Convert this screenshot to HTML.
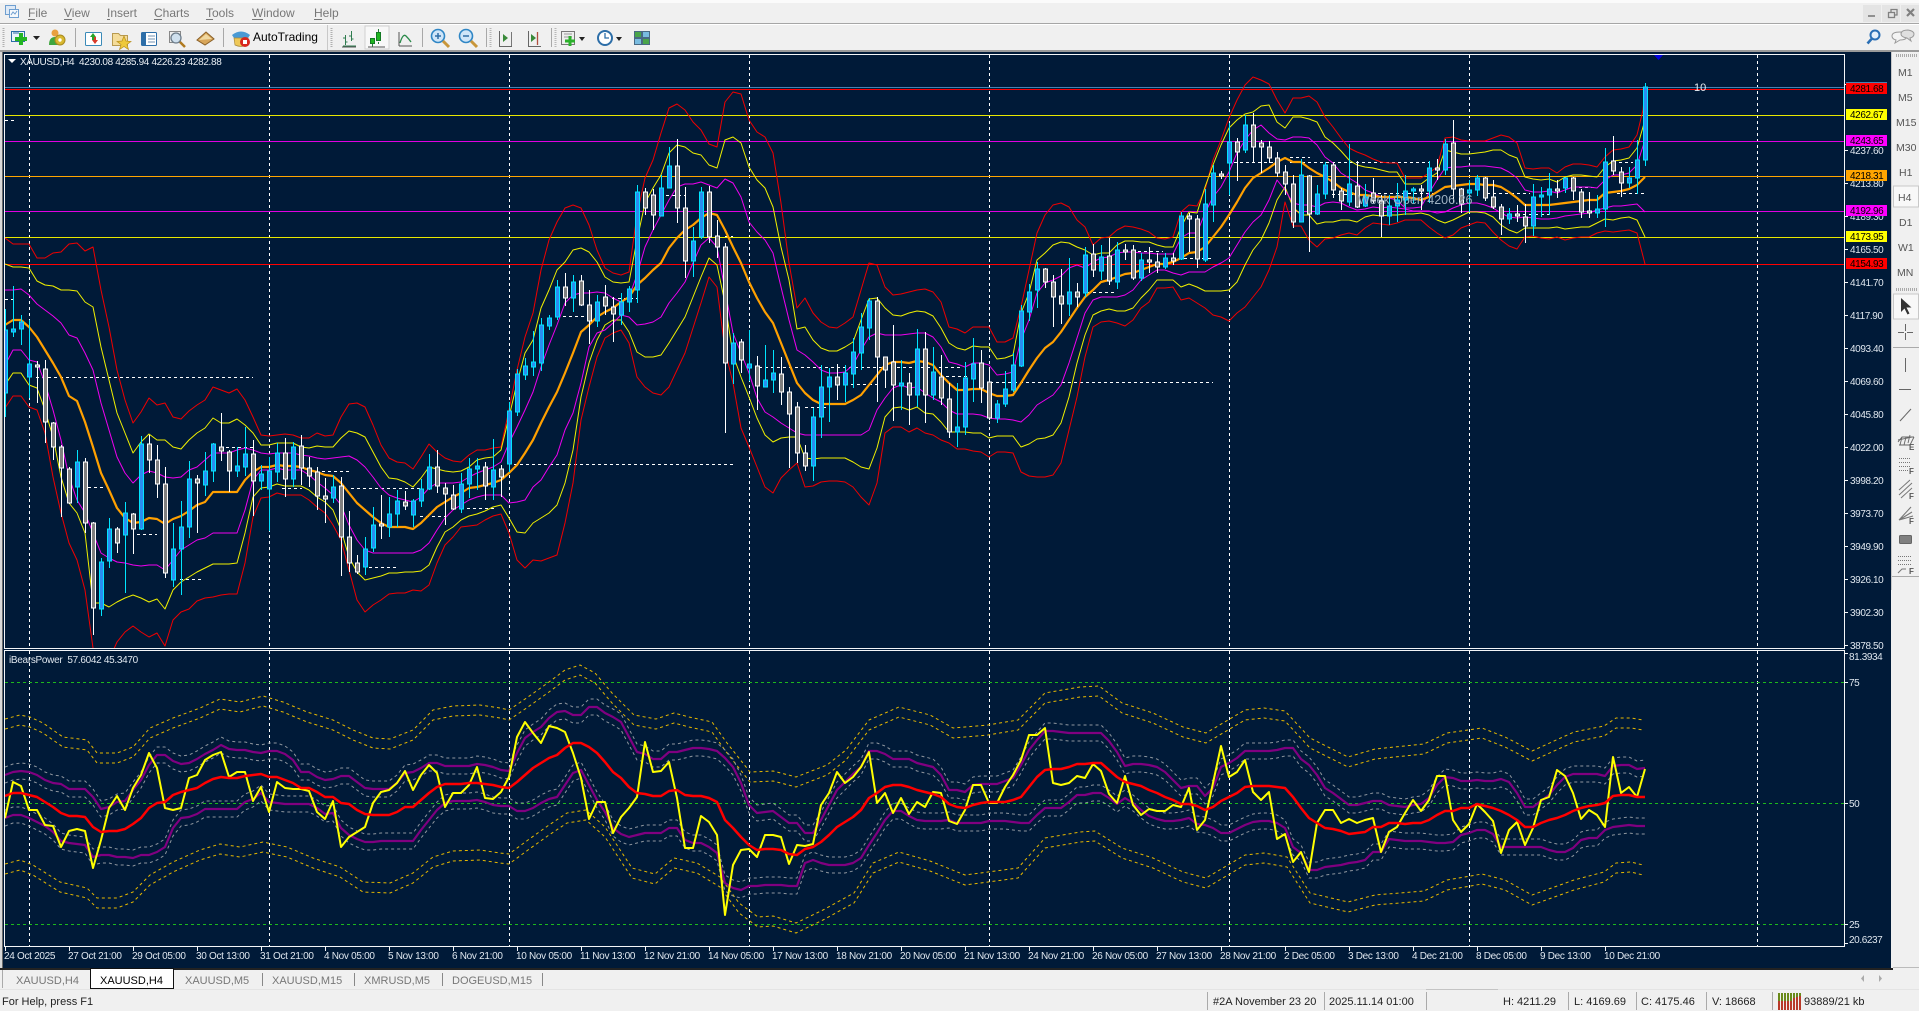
<!DOCTYPE html>
<html><head><meta charset="utf-8"><title>MT4</title>
<style>
html,body{margin:0;padding:0;background:#f0f0f0;width:1919px;height:1011px;overflow:hidden}
svg{display:block;position:absolute;left:0;top:0}
text{font-family:"Liberation Sans",sans-serif}
.m{font-size:12px;fill:#777}
.a{font-size:10px;fill:#dfe7ef;letter-spacing:-.4px}
.t{font-size:10px;fill:#dfe7ef;letter-spacing:-.3px}
.l{font-size:10px;fill:#000;letter-spacing:-.4px}
.tb{font-size:11px;fill:#777}
.s{font-size:11px;fill:#222}
.f{font-size:10.5px;fill:#555}
.b{fill:none;stroke-linejoin:round}
</style></head><body>
<svg width="1919" height="1011" viewBox="0 0 1919 1011" shape-rendering="auto">
<defs>
<clipPath id="cm"><rect x="5" y="55" width="1839" height="593"/></clipPath>
<clipPath id="cs"><rect x="5" y="651" width="1839" height="295"/></clipPath>
<path id="pu" d="M5 775 13 772 21 771 29 772 37 775 45 780 53 783 61 784 69 789 77 789 85 789 93 797 101 809 109 807 117 802 125 801 133 790 141 780 149 765 157 755 165 755 173 761 181 764 189 763 197 759 205 754 213 750 221 745 229 749 237 750 245 750 253 752 261 753 269 751 277 751 285 754 293 760 301 772 309 772 317 777 325 780 333 779 341 776 349 776 357 782 365 788 373 789 381 789 389 789 397 783 405 773 413 772 421 768 429 763 437 763 445 766 453 766 461 766 469 766 477 764 485 765 493 767 501 770 509 771 517 753 525 738 533 732 541 727 549 718 557 712 565 711 573 715 581 715 589 707 597 707 605 713 613 717 621 722 629 737 637 752 645 754 653 759 661 759 669 752 677 752 685 750 693 748 701 748 709 749 717 751 725 758 733 767 741 783 749 805 757 813 765 812 773 811 781 817 789 823 797 823 805 833 813 833 821 820 829 805 837 790 845 782 853 774 861 767 869 751 877 751 885 754 893 759 901 759 909 759 917 763 925 765 933 767 941 775 949 790 957 790 965 792 973 785 981 784 989 784 997 784 1005 781 1013 778 1021 765 1029 750 1037 740 1045 731 1053 731 1061 732 1069 733 1077 733 1085 733 1093 733 1101 733 1109 741 1117 752 1125 766 1133 764 1141 764 1149 765 1157 767 1165 772 1173 780 1181 788 1189 786 1197 786 1205 796 1213 788 1221 767 1229 763 1237 758 1245 751 1253 751 1261 751 1269 751 1277 750 1285 748 1293 748 1301 759 1309 765 1317 775 1325 788 1333 793 1341 799 1349 805 1357 805 1365 803 1373 801 1381 801 1389 805 1397 806 1405 807 1413 805 1421 804 1429 798 1437 785 1445 777 1453 778 1461 781 1469 781 1477 780 1485 781 1493 781 1501 779 1509 782 1517 793 1525 807 1533 807 1541 801 1549 795 1557 785 1565 777 1573 774 1581 774 1589 774 1597 774 1605 776 1613 766 1621 765 1629 765 1637 769 1645 768"/>
<path id="pl" d="M5 818 13 815 21 815 29 818 37 822 45 826 53 832 61 841 69 843 77 844 85 845 93 857 101 855 109 855 117 857 125 857 133 858 141 855 149 855 157 852 165 847 173 828 181 818 189 817 197 814 205 809 213 809 221 809 229 809 237 809 245 802 253 799 261 793 269 802 277 803 285 804 293 804 301 804 309 804 317 808 325 814 333 813 341 828 349 835 357 839 365 842 373 842 381 841 389 841 397 841 405 841 413 841 421 830 429 820 437 810 445 803 453 801 461 801 469 801 477 800 485 802 493 805 501 806 509 806 517 811 525 811 533 808 541 803 549 799 557 797 565 785 573 773 581 770 589 785 597 800 605 812 613 828 621 834 629 837 637 835 645 833 653 833 661 833 669 828 677 828 685 840 693 843 701 843 709 847 717 853 725 883 733 888 741 890 749 886 757 886 765 885 773 885 781 885 789 886 797 886 805 863 813 860 821 863 829 865 837 865 845 865 853 863 861 858 869 845 877 833 885 820 893 811 901 811 909 816 917 820 925 821 933 821 941 821 949 820 957 823 965 823 973 823 981 823 989 821 997 821 1005 821 1013 822 1021 823 1029 823 1037 815 1045 808 1053 808 1061 808 1069 802 1077 795 1085 795 1093 793 1101 793 1109 798 1117 804 1125 798 1133 803 1141 810 1149 816 1157 819 1165 821 1173 821 1181 820 1189 818 1197 824 1205 825 1213 828 1221 833 1229 833 1237 829 1245 825 1253 822 1261 821 1269 821 1277 823 1285 828 1293 847 1301 853 1309 870 1317 870 1325 867 1333 866 1341 865 1349 863 1357 862 1365 860 1373 852 1381 852 1389 839 1397 840 1405 841 1413 841 1421 841 1429 842 1437 843 1445 843 1453 842 1461 835 1469 833 1477 830 1485 830 1493 834 1501 847 1509 847 1517 847 1525 847 1533 847 1541 847 1549 850 1557 852 1565 852 1573 848 1581 840 1589 838 1597 838 1605 830 1613 827 1621 826 1629 825 1637 826 1645 826"/>
<path id="gu" d="M5 719 20 715 30 717 43 723 63 737 87 740 97 753 117 753 133 747 150 728 173 718 200 708 220 699 240 702 263 696 283 702 307 712 333 720 353 730 373 738 390 739 413 730 433 710 453 706 480 705 500 708 509 710 528 697 549 682 565 670 580 665 595 673 612 693 634 715 656 719 674 713 689 717 712 722 727 743 750 772 773 771 796 777 827 765 846 750 869 720 899 707 930 715 953 728 988 725 1018 720 1045 693 1080 687 1099 686 1122 703 1153 713 1183 727 1206 733 1245 710 1264 708 1285 711 1310 738 1348 757 1375 749 1424 744 1447 733 1482 728 1505 737 1532 751 1574 732 1604 726 1616 718 1631 718 1643 720"/>
<path id="gl" d="M5 864 20 860 33 865 60 882 87 888 97 898 117 898 133 892 150 875 173 862 200 850 220 844 240 847 263 842 287 847 313 858 340 867 363 882 390 883 413 873 433 857 453 851 480 850 500 853 509 854 528 840 549 825 567 813 586 810 605 827 632 868 655 874 674 858 697 863 720 877 739 903 758 917 773 916 796 923 823 910 854 893 873 863 899 852 930 861 965 875 988 872 1018 868 1045 838 1080 832 1095 831 1122 848 1153 858 1183 872 1206 878 1245 855 1264 853 1287 857 1310 893 1348 902 1375 895 1424 891 1447 880 1482 874 1505 880 1532 895 1574 880 1604 872 1616 863 1631 862 1643 865"/>
</defs>
<!-- window chrome -->
<rect x="0" y="0" width="1919" height="1011" fill="#f0f0f0"/>
<rect x="0" y="0" width="1919" height="3" fill="#fbfbfb"/>
<rect x="0" y="23" width="1919" height="1" fill="#a6a6a6"/>
<rect x="0" y="24" width="1919" height="1" fill="#fff"/>
<rect x="0" y="50" width="1919" height="2" fill="#9a9a9a"/>
<!-- app icon -->
<g fill="none" stroke="#6f9fd0"><rect x="5.5" y="5.5" width="10" height="9" fill="#dfeaf6"/><rect x="9.5" y="9.5" width="9" height="8" fill="#f4f8fc"/><path d="M11 15l2-3 2 2 2-3"/></g>
<text class="m" x="28" y="17">File</text>
<text class="m" x="64" y="17">View</text>
<text class="m" x="107" y="17">Insert</text>
<text class="m" x="154" y="17">Charts</text>
<text class="m" x="206" y="17">Tools</text>
<text class="m" x="252" y="17">Window</text>
<text class="m" x="314" y="17">Help</text>
<g fill="#777"><rect x="28" y="19" width="7" height="1"/><rect x="64" y="19" width="8" height="1"/><rect x="107" y="19" width="3" height="1"/><rect x="154" y="19" width="8" height="1"/><rect x="206" y="19" width="7" height="1"/><rect x="252" y="19" width="11" height="1"/><rect x="314" y="19" width="8" height="1"/></g>
<!-- window buttons -->
<rect x="1863" y="5" width="18" height="17" fill="#e4e4e4"/><rect x="1882" y="5" width="18" height="17" fill="#e4e4e4"/><rect x="1901" y="5" width="18" height="17" fill="#e4e4e4"/>
<rect x="1868" y="15" width="7" height="2" fill="#909090"/>
<g fill="none" stroke="#808080" stroke-width="1.3"><rect x="1888.5" y="12.5" width="6" height="5"/><path d="M1891 12V9.500h6v5.500h-2"/></g>
<path d="M1907 9l7 7M1914 9l-7 7" stroke="#808080" stroke-width="2.200"/>
<!-- toolbar grips -->
<path d="M3.500 28V48M331.500 28V48" stroke="#b0b0b0" stroke-width="2" stroke-dasharray="1 1"/>
<path d="M75.500 28V47M223.500 28V47M422.500 28V47M486.500 28V47M551.500 28V47" stroke="#a8a8a8"/>
<path d="M327.500 25V50" stroke="#c8c8c8"/>
<path d="M490.500 28V48M555.500 28V48" stroke="#b8b8b8" stroke-width="2" stroke-dasharray="1 1"/>
<!-- new chart -->
<rect x="11.500" y="31.500" width="13" height="10" fill="#eaf2fb" stroke="#2d6ea8"/><path d="M13 33h6" stroke="#2d6ea8"/>
<path d="M21 33v12M15 39h12" stroke="#22b422" stroke-width="4"/>
<path d="M33 36h7l-3.500 4z" fill="#222"/>
<!-- profiles -->
<circle cx="55" cy="33" r="3.500" fill="#e8a040"/><path d="M49 45q0-8 6-8 6 0 6 8z" fill="#3fa63f"/><circle cx="60" cy="40" r="5" fill="#d8b830" stroke="#a88a20"/><circle cx="60" cy="40" r="1.700" fill="#fff"/>
<!-- market watch -->
<rect x="85.500" y="32.500" width="16" height="13" rx="1" fill="#fff" stroke="#3a8ab8"/><path d="M93 33l-3 4h2v3h2v-3h2z" fill="#28a428"/><path d="M95 44l3-4h-2v-3h-2v3h-2z" fill="#d83a2a"/>
<!-- navigator -->
<path d="M112.500 33.500h6l2 2h7v10h-15z" fill="#f4dc9a" stroke="#b89a50"/><path d="M124 36l2 5 5 .5-4 3 1.500 5-4.500-3-4.500 3 1.500-5-4-3 5-.5z" fill="#eec93a" stroke="#b89020" stroke-width=".7"/>
<!-- terminal -->
<rect x="141.500" y="32.500" width="15" height="13" rx="1" fill="#fff" stroke="#2d6ea8"/><rect x="142" y="33" width="4" height="12" fill="#2d6ea8"/><path d="M148 36h7M148 39h7M148 42h7" stroke="#7090b0"/>
<!-- tester -->
<rect x="169.500" y="31.500" width="11" height="11" fill="#eee" stroke="#888"/><circle cx="176" cy="38" r="5" fill="#cfe0ee" stroke="#6d7c8a" stroke-width="1.300"/><path d="M180 42l5 5" stroke="#b07a20" stroke-width="2.500"/>
<!-- editor -->
<path d="M197 40l9-8 8 7-9 6z" fill="#d8a65a" stroke="#8a6028"/><path d="M199 40l7-6 6 5" fill="#f0d8a0" stroke="none"/>
<!-- autotrading -->
<path d="M232 35q9-7 18 0l-2 3h-14z" fill="#4a9ad4"/><path d="M234 38h14l-1 7q-6 3-12 0z" fill="#eec858" stroke="#a8893a" stroke-width=".7"/><circle cx="245" cy="42" r="5" fill="#d8281e"/><rect x="243" y="40" width="4" height="4" fill="#fff"/>
<text x="253" y="41" style="font-size:12px;fill:#000">AutoTrading</text>
<!-- chart type buttons -->
<path d="M343 46h13M345.500 45V35M351.500 41V31M343 38h2.500M345.500 42h2M349 36h2.500M351.500 39h2" stroke="#2f7d4f" fill="none"/>
<path d="M342 47h14" stroke="#555"/>
<rect x="365" y="26" width="24" height="23" fill="#f8f8f8" stroke="#cfcfcf"/>
<path d="M372.500 45V38M378.500 36V29M372.500 47V44M378.500 44V42" stroke="#2a7d3c"/><rect x="370.500" y="38.500" width="4" height="5" fill="#1fb51f" stroke="#147a24"/><rect x="376.500" y="32.500" width="4" height="8" fill="#1fb51f" stroke="#147a24"/><path d="M368 47h17" stroke="#555"/>
<path d="M399 46V32M399 46h13" stroke="#555"/><path d="M400 43q3-10 6-7t5 6" stroke="#2a8a4a" fill="none" stroke-width="1.300"/>
<!-- zoom -->
<circle cx="438" cy="36" r="6.500" fill="#cfe5f8" stroke="#2f86c5" stroke-width="1.600"/><path d="M435 36h6M438 33v6" stroke="#2f6da5" stroke-width="1.500"/><path d="M443 41l6 6" stroke="#c8963a" stroke-width="3"/>
<circle cx="466" cy="36" r="6.500" fill="#cfe5f8" stroke="#2f86c5" stroke-width="1.600"/><path d="M463 36h6" stroke="#2f6da5" stroke-width="1.500"/><path d="M471 41l6 6" stroke="#c8963a" stroke-width="3"/>
<!-- shift/scroll -->
<path d="M499.500 31V46M499 46.500h13" stroke="#666" fill="none"/><path d="M503 34v8l5-4z" fill="#3a8a3a"/><path d="M511.500 32V46" stroke="#777"/>
<path d="M528.500 31V46M528 46.500h13" stroke="#666" fill="none"/><path d="M531 34v8l5-4z" fill="#3a8a3a"/><path d="M537.500 32V45" stroke="#b05040" stroke-width="1.300"/>
<!-- add indicator -->
<rect x="561.500" y="31.500" width="13" height="13" fill="#eee" stroke="#777"/><path d="M564 34h8M564 37h8" stroke="#999"/><path d="M570 36v10M565 41h10" stroke="#2bb02b" stroke-width="3"/><path d="M579 37h6l-3 4z" fill="#222"/>
<!-- clock -->
<circle cx="605" cy="38" r="7" fill="#fff" stroke="#2d6ea8" stroke-width="2"/><path d="M605 33v5h4" stroke="#2d6ea8" stroke-width="1.300" fill="none"/><path d="M616 37h6l-3 4z" fill="#222"/>
<!-- templates -->
<g stroke="#4a6a84"><rect x="634.500" y="31.500" width="7" height="6" fill="#4aa54a"/><rect x="642.500" y="31.500" width="7" height="6" fill="#7abce0"/><rect x="634.500" y="38.500" width="7" height="6" fill="#7abce0"/><rect x="642.500" y="38.500" width="7" height="6" fill="#4aa54a"/></g>
<!-- search & chat -->
<circle cx="1875" cy="35" r="4.500" fill="#e4f0fb" stroke="#2a6fb5" stroke-width="2"/><path d="M1871.500 39l-4 4.500" stroke="#2a6fb5" stroke-width="2.600"/>
<path d="M1900 32q-8 0-8 4 0 3 4 4l-1 3 5-3q7 0 7-4t-7-4z" fill="#f4f4f4" stroke="#9a9a9a"/><path d="M1908 30q-7 0-7 4 0 3 6 4l4 3-1-3q4-1 4-4t-6-4z" fill="#e0e0e0" stroke="#9a9a9a"/>

<!-- chart background -->
<rect x="3" y="52" width="1888" height="916" fill="#001a38"/>
<rect x="0" y="52" width="3" height="916" fill="#d8d8d8"/>
<rect x="2" y="52" width="1" height="916" fill="#6a6a6a"/>
<rect x="1891" y="52" width="1" height="538" fill="#c8c8c8"/>

<!-- MAIN CHART -->
<g clip-path="url(#cm)">
<g stroke="#fff" stroke-dasharray="3 3" fill="none">
<path d="M29.500 55V648M269.500 55V648M509.500 55V648M749.500 55V648M989.500 55V648M1229.500 55V648M1469.500 55V648M1757.500 55V648"/>
</g>
<g fill="none" stroke-width="1">
<path d="M5 87.500H1844" stroke="#4682b4"/>
<path d="M5 89.500H1844" stroke="#ff0000"/>
<path d="M5 115.500H1844" stroke="#e8e800" />
<path d="M5 141.500H1844" stroke="#e000e0"/>
<path d="M5 176.500H1844" stroke="#ffa500"/>
<path d="M5 211.500H1844" stroke="#e000e0"/>
<path d="M5 237.500H1844" stroke="#e8e800"/>
<path d="M5 264.500H1844" stroke="#ff0000"/>
</g>
<g stroke="#fff" stroke-dasharray="3 3" fill="none">
<path d="M5 120.500H14M5 299.500H14M36 377.500H253M88 487.500H104M137 534.500H157M180 579.500H204M226 447.500H253M322 471.500H349M282 488.500H302M351 488.500H420M369 567.500H398M420 516.500H445M461 508.500H494M563 316.500H586M612 298.500H637M514 464.500H733M666 195.500H685M725 236.500H733M759 367.500H963M851 384.500H877M805 407.500H830M946 376.500H969M990 382.500H1213M1087 292.500H1117M1138 251.500H1163M1184 258.500H1213M1234 162.500H1276M1290 157.500H1310M1290 162.500H1430M1332 194.500H1357M1378 193.500H1437M1487 193.500H1530M1617 193.500H1645M1573 187.500H1597M1523 214.500H1550M1613 162.500H1633"/>
</g>
<!-- red bands -->
<path class="b" stroke="#f00000" d="M5 238 13 244 21 244 29 244 37 258 45 258 53 253 61 252 69 244 77 243 85 251 93 247 101 290 109 327 117 370 125 400 133 423 141 412 149 398 157 405 165 403 173 417 181 419 189 411 197 405 205 400 213 387 221 390 229 393 237 389 245 400 253 417 261 435 269 436 277 435 285 434 293 435 301 438 309 438 317 433 325 436 333 435 341 417 349 404 357 403 365 407 373 425 381 445 389 458 397 462 405 463 413 469 421 457 429 444 437 452 445 458 453 461 461 462 469 455 477 450 485 450 493 448 501 447 509 410 517 370 525 337 533 313 541 270 549 240 557 222 565 208 573 205 581 208 589 225 597 250 605 268 613 273 621 275 629 272 637 215 645 178 653 160 661 133 669 108 677 104 685 110 693 122 701 130 709 144 717 147 725 102 733 92 741 94 749 120 757 132 765 137 773 153 781 203 789 263 797 308 805 298 813 313 821 322 829 327 837 328 845 323 853 317 861 290 869 263 877 265 885 287 893 295 901 294 909 292 917 290 925 289 933 292 941 302 949 327 957 329 965 333 973 327 981 327 989 327 997 342 1005 342 1013 338 1021 307 1029 270 1037 233 1045 215 1053 205 1061 203 1069 207 1077 220 1085 227 1093 245 1101 238 1109 237 1117 230 1125 226 1133 227 1141 229 1149 232 1157 238 1165 239 1173 237 1181 212 1189 205 1197 206 1205 190 1213 160 1221 140 1229 118 1237 100 1245 85 1253 77 1261 80 1269 84 1277 100 1285 113 1293 98 1301 98 1309 96 1317 102 1325 117 1333 127 1341 138 1349 148 1357 152 1365 155 1373 159 1381 162 1389 163 1397 163 1405 178 1413 178 1421 178 1429 173 1437 167 1445 138 1453 137 1461 140 1469 141 1477 141 1485 141 1493 138 1501 135 1509 137 1517 143 1525 168 1533 169 1541 168 1549 168 1557 173 1565 167 1573 164 1581 164 1589 165 1597 167 1605 157 1613 150 1621 149 1629 147 1637 135 1643 110 1645 88"/>
<path class="b" stroke="#f00000" d="M5 408 13 396 21 396 29 407 37 410 45 433 53 477 61 513 69 543 77 560 85 590 93 648 101 660 109 660 117 642 125 632 133 626 141 632 149 637 157 633 165 646 173 620 181 612 189 609 197 601 205 598 213 597 221 595 229 594 237 594 245 563 253 517 261 498 269 497 277 493 285 495 293 495 301 495 309 500 317 507 325 513 333 525 341 540 349 570 357 600 365 612 373 605 381 600 389 594 397 593 405 593 413 590 421 591 429 585 437 563 445 545 453 537 461 527 469 526 477 525 485 520 493 516 501 514 509 533 517 560 525 568 533 560 541 561 549 558 557 555 565 523 573 483 581 420 589 387 597 357 605 338 613 333 621 330 629 343 637 377 645 387 653 393 661 395 669 387 677 370 685 353 693 328 701 303 709 277 717 287 725 350 733 383 741 428 749 447 757 467 765 487 773 493 781 478 789 470 797 463 805 487 813 486 821 482 829 481 837 481 845 482 853 487 861 497 869 505 877 483 885 433 893 427 901 427 909 432 917 428 925 433 933 435 941 440 949 443 957 449 965 449 973 451 981 452 989 457 997 452 1005 452 1013 453 1021 472 1029 476 1037 477 1045 477 1053 475 1061 463 1069 430 1077 397 1085 357 1093 327 1101 322 1109 321 1117 323 1125 326 1133 320 1141 308 1149 302 1157 288 1165 288 1173 287 1181 300 1189 298 1197 303 1205 308 1213 315 1221 317 1229 321 1237 313 1245 307 1253 297 1261 287 1269 270 1277 247 1285 202 1293 226 1301 226 1309 240 1317 247 1325 239 1333 238 1341 235 1349 233 1357 235 1365 228 1373 223 1381 224 1389 225 1397 223 1405 220 1413 220 1421 220 1429 227 1437 233 1445 238 1453 235 1461 228 1469 225 1477 222 1485 223 1493 232 1501 240 1509 246 1517 249 1525 237 1533 236 1541 238 1549 239 1557 237 1565 240 1573 238 1581 237 1589 237 1597 233 1605 231 1613 232 1621 231 1629 230 1637 233 1645 264"/>
<!-- yellow bands -->
<path class="b" stroke="#f0f000" d="M5 264 13 267 21 267 29 268 37 281 45 285 53 286 61 290 69 290 77 291 85 302 93 307 101 347 109 380 117 413 125 433 133 453 141 442 149 434 157 440 165 440 173 447 181 449 189 440 197 433 205 428 213 418 221 423 229 423 237 419 245 425 253 433 261 445 269 445 277 443 285 443 293 443 301 447 309 448 317 446 325 447 333 447 341 438 349 431 357 433 365 437 373 452 381 467 389 478 397 479 405 482 413 487 421 478 429 467 437 469 445 471 453 472 461 471 469 467 477 460 485 458 493 457 501 450 509 417 517 383 525 353 533 340 541 308 549 290 557 270 565 262 573 250 581 248 589 252 597 262 605 277 613 282 621 283 629 282 637 240 645 203 653 188 661 175 669 153 677 145 685 147 693 153 701 155 709 165 717 168 725 140 733 137 741 143 749 167 757 180 765 188 773 207 781 247 789 280 797 329 805 327 813 340 821 348 829 351 837 351 845 347 853 342 861 320 869 299 877 298 885 308 893 315 901 316 909 313 917 311 925 312 933 316 941 328 949 343 957 348 965 350 973 346 981 347 989 347 997 359 1005 358 1013 355 1021 313 1029 293 1037 260 1045 253 1053 245 1061 242 1069 243 1077 247 1085 250 1093 255 1101 253 1109 253 1117 245 1125 241 1133 241 1141 242 1149 242 1157 245 1165 247 1173 247 1181 227 1189 212 1197 213 1205 187 1213 165 1221 145 1229 128 1237 120 1245 114 1253 112 1261 106 1269 105 1277 122 1285 128 1293 117 1301 117 1309 119 1317 122 1325 137 1333 143 1341 151 1349 160 1357 165 1365 167 1373 168 1381 170 1389 172 1397 172 1405 184 1413 184 1421 184 1429 178 1437 173 1445 150 1453 152 1461 154 1469 154 1477 153 1485 152 1493 150 1501 150 1509 155 1517 158 1525 177 1533 179 1541 180 1549 179 1557 182 1565 177 1573 175 1581 175 1589 176 1597 177 1605 167 1613 161 1621 160 1629 158 1637 148 1645 120"/>
<path class="b" stroke="#f0f000" d="M5 385 13 373 21 373 29 385 37 388 45 410 53 437 61 477 69 503 77 513 85 533 93 603 101 603 109 607 117 602 125 598 133 595 141 598 149 602 157 599 165 609 173 590 181 582 189 577 197 572 205 568 213 564 221 564 229 564 237 563 245 533 253 497 261 488 269 487 277 484 285 486 293 486 301 486 309 490 317 497 325 502 333 510 341 530 349 557 357 572 365 580 373 578 381 576 389 573 397 573 405 572 413 572 421 571 429 565 437 547 445 532 453 527 461 520 469 516 477 514 485 511 493 507 501 505 509 518 517 532 525 533 533 523 541 518 549 513 557 505 565 483 573 450 581 397 589 363 597 340 605 325 613 320 621 320 629 332 637 352 645 357 653 357 661 355 669 343 677 330 685 317 693 297 701 277 709 258 717 265 725 303 733 355 741 377 749 397 757 418 765 435 773 442 781 438 789 437 797 437 805 458 813 459 821 458 829 458 837 458 845 458 853 462 861 467 869 469 877 448 885 417 893 408 901 407 909 410 917 407 925 413 933 414 941 422 949 432 957 432 965 432 973 433 981 433 989 438 997 436 1005 436 1013 436 1021 447 1029 444 1037 439 1045 438 1053 435 1061 423 1069 397 1077 363 1085 335 1093 315 1101 311 1109 309 1117 311 1125 311 1133 308 1141 298 1149 290 1157 280 1165 280 1173 280 1181 287 1189 284 1197 287 1205 291 1213 291 1221 291 1229 290 1237 282 1245 265 1253 250 1261 240 1269 223 1277 200 1285 187 1293 207 1301 215 1309 215 1317 224 1325 222 1333 222 1341 220 1349 220 1357 222 1365 217 1373 215 1381 216 1389 215 1397 215 1405 214 1413 214 1421 213 1429 215 1437 220 1445 223 1453 220 1461 216 1469 212 1477 212 1485 213 1493 217 1501 225 1509 230 1517 233 1525 228 1533 228 1541 228 1549 228 1557 227 1565 229 1573 228 1581 227 1589 227 1597 223 1605 219 1613 220 1621 218 1629 217 1637 220 1645 237"/>
<!-- magenta bands -->
<path class="b" stroke="#f000f0" d="M5 290 13 290 21 289 29 295 37 304 45 310 53 316 61 323 69 335 77 338 85 353 93 370 101 403 109 430 117 457 125 473 133 483 141 475 149 471 157 473 165 477 173 478 181 477 189 470 197 467 205 460 213 453 221 453 229 453 237 450 245 448 253 450 261 453 269 454 277 453 285 453 293 453 301 455 309 456 317 458 325 459 333 458 341 457 349 456 357 460 365 467 373 477 381 488 389 495 397 498 405 500 413 502 421 497 429 488 437 483 445 483 453 483 461 482 469 477 477 473 485 470 493 467 501 462 509 443 517 427 525 410 533 392 541 367 549 345 557 325 565 303 573 295 581 293 589 293 597 292 605 293 613 298 621 302 629 297 637 275 645 247 653 230 661 215 669 200 677 187 685 184 693 184 701 182 709 185 717 188 725 179 733 183 741 197 749 222 757 232 765 240 773 253 781 287 789 320 797 350 805 355 813 362 821 370 829 373 837 373 845 372 853 365 861 350 869 337 877 333 885 335 893 335 901 335 909 334 917 333 925 333 933 337 941 347 949 362 957 364 965 367 973 363 981 363 989 365 997 375 1005 374 1013 372 1021 340 1029 320 1037 293 1045 283 1053 280 1061 276 1069 268 1077 265 1085 268 1093 262 1101 258 1109 257 1117 253 1125 252 1133 252 1141 253 1149 253 1157 254 1165 254 1173 254 1181 238 1189 233 1197 233 1205 213 1213 197 1221 187 1229 172 1237 153 1245 140 1253 130 1261 125 1269 133 1277 139 1285 140 1293 137 1301 137 1309 138 1317 145 1325 157 1333 163 1341 173 1349 178 1357 183 1365 190 1373 193 1381 197 1389 198 1397 200 1405 208 1413 208 1421 207 1429 193 1437 180 1445 168 1453 167 1461 167 1469 166 1477 166 1485 166 1493 167 1501 168 1509 172 1517 178 1525 190 1533 192 1541 192 1549 191 1557 193 1565 190 1573 187 1581 187 1589 187 1597 188 1605 180 1613 175 1621 175 1629 173 1637 165 1645 140"/>
<path class="b" stroke="#f000f0" d="M5 365 13 350 21 350 29 360 37 362 45 383 53 410 61 440 69 477 77 500 85 513 93 533 101 553 109 558 117 562 125 563 133 565 141 566 149 565 157 565 165 570 173 560 181 550 189 545 197 540 205 538 213 533 221 533 229 533 237 533 245 510 253 480 261 470 269 470 277 468 285 470 293 470 301 470 309 475 317 482 325 488 333 495 341 505 349 525 357 540 365 550 373 553 381 553 389 553 397 553 405 553 413 553 421 550 429 543 437 530 445 518 453 510 461 505 469 500 477 497 485 495 493 495 501 495 509 503 517 502 525 500 533 487 541 480 549 467 557 455 565 430 573 413 581 383 589 347 597 333 605 330 613 323 621 315 629 317 637 325 645 324 653 322 661 317 669 303 677 293 685 282 693 263 701 245 709 238 717 247 725 290 733 333 741 353 749 373 757 398 765 412 773 417 781 423 789 428 797 433 805 435 813 435 821 435 829 435 837 435 845 435 853 435 861 435 869 430 877 410 885 398 893 388 901 385 909 388 917 387 925 393 933 398 941 402 949 410 957 414 965 414 973 414 981 415 989 418 997 419 1005 419 1013 420 1021 422 1029 415 1037 405 1045 400 1053 395 1061 385 1069 363 1077 338 1085 313 1093 300 1101 297 1109 297 1117 297 1125 295 1133 290 1141 280 1149 275 1157 270 1165 270 1173 273 1181 275 1189 272 1197 272 1205 272 1213 267 1221 263 1229 258 1237 245 1245 232 1253 222 1261 215 1269 200 1277 180 1285 190 1293 203 1301 205 1309 205 1317 207 1325 203 1333 202 1341 203 1349 207 1357 210 1365 209 1373 207 1381 208 1389 207 1397 208 1405 209 1413 211 1421 211 1429 211 1437 213 1445 212 1453 208 1461 205 1469 203 1477 203 1485 205 1493 208 1501 213 1509 217 1517 218 1525 217 1533 218 1541 219 1549 219 1557 218 1565 216 1573 215 1581 214 1589 213 1597 210 1605 208 1613 206 1621 206 1629 205 1637 204 1645 212"/>
<!-- orange MA -->
<path class="b" stroke="#ffa000" stroke-width="2.200" d="M5 325 13 320 21 320 29 327 37 337 45 350 53 363 61 377 69 396 77 401 85 422 93 447 101 473 109 490 117 508 125 518 133 523 141 522 149 518 157 519 165 524 173 519 181 516 189 511 197 505 205 502 213 492 221 492 229 492 237 492 245 480 253 472 261 467 269 467 277 465 285 466 293 466 301 467 309 470 317 472 325 475 333 476 341 483 349 493 357 503 365 510 373 517 381 523 389 527 397 527 405 527 413 529 421 523 429 515 437 507 445 502 453 497 461 493 469 488 477 487 485 485 493 483 501 480 509 473 517 465 525 453 533 440 541 423 549 407 557 392 565 373 573 353 581 332 589 325 597 317 605 312 613 308 621 302 629 297 637 285 645 278 653 270 661 263 669 248 677 238 685 230 693 225 701 218 709 213 717 215 725 230 733 247 741 263 749 282 757 298 765 312 773 323 781 343 789 363 797 383 805 393 813 400 821 404 829 404 837 404 845 404 853 400 861 395 869 385 877 375 885 365 893 362 901 362 909 363 917 361 925 362 933 365 941 375 949 383 957 390 965 390 973 389 981 389 989 393 997 396 1005 396 1013 395 1021 383 1029 370 1037 358 1045 348 1053 342 1061 332 1069 320 1077 308 1085 297 1093 290 1101 282 1109 280 1117 277 1125 274 1133 273 1141 270 1149 267 1157 264 1165 264 1173 262 1181 258 1189 253 1197 252 1205 247 1213 237 1221 227 1229 215 1237 202 1245 188 1253 178 1261 173 1269 168 1277 162 1285 158 1293 162 1301 162 1309 168 1317 173 1325 177 1333 182 1341 188 1349 192 1357 195 1365 195 1373 196 1381 197 1389 197 1397 197 1405 197 1413 198 1421 200 1429 197 1437 192 1445 187 1453 186 1461 185 1469 184 1477 184 1485 185 1493 185 1501 187 1509 192 1517 198 1525 205 1533 205 1541 205 1549 205 1557 204 1565 203 1573 202 1581 201 1589 200 1597 200 1605 193 1613 192 1621 191 1629 189 1637 185 1645 177"/>
<!-- wicks -->
<path fill="none" stroke="#00e5ff" d="M5.500 309V417M13.500 286V337M21.500 315V345M29.500 320V398M77.500 450V503M101.500 558V616M109.500 518V568M125.500 502V593M141.500 436V530M173.500 523V587M181.500 501V595M189.500 461V538M205.500 452V496M213.500 443V482M237.500 447V477M245.500 427V476M261.500 465V490M269.500 457V531M277.500 443V482M293.500 442V487M333.500 475V503M365.500 537V575M373.500 507V552M389.500 497V537M397.500 490V527M413.500 499V527M421.500 479V507M429.500 454V490M461.500 473V513M469.500 458V498M477.500 458V490M493.500 439V500M509.500 402V472M517.500 369V416M525.500 358V380M533.500 331V376M541.500 318V371M549.500 315V330M557.500 280V320M573.500 275V312M597.500 295V327M621.500 293V325M629.500 286V312M637.500 185V303M661.500 175V216M669.500 147V188M693.500 227V277M701.500 187V239M733.500 333V384M749.500 330V381M765.500 345V387M773.500 350V393M813.500 408V481M821.500 365V438M829.500 368V422M845.500 365V402M853.500 338V388M861.500 313V370M869.500 298V340M901.500 360V410M917.500 329V407M933.500 347V400M957.500 383V447M965.500 362V435M973.500 338V402M997.500 400V423M1005.500 371V407M1013.500 353V392M1021.500 305V367M1029.500 284V321M1037.500 262V308M1069.500 258V316M1085.500 247V297M1101.500 245V280M1117.500 242V289M1141.500 253V281M1165.500 253V269M1181.500 212V260M1205.500 189V262M1213.500 165V222M1229.500 123V195M1245.500 115V153M1301.500 159V222M1317.500 185V215M1325.500 162V199M1349.500 144V206M1365.500 184V207M1389.500 195V225M1397.500 183V222M1405.500 175V215M1413.500 187V203M1429.500 161V203M1445.500 139V175M1469.500 180V212M1477.500 175V196M1509.500 208V224M1533.500 184V236M1541.500 187V217M1549.500 173V215M1565.500 177V193M1597.500 195V218M1605.500 148V227M1629.500 167V188M1637.500 140V194M1645.500 83V166"/>
<path fill="none" stroke="#fff" d="M37.500 361V403M45.500 360V443M53.500 422V460M61.500 445V517M69.500 467V504M85.500 458V533M93.500 522V635M117.500 527V553M133.500 513V554M149.500 435V473M157.500 445V498M165.500 467V578M197.500 475V533M221.500 413V461M229.500 450V492M253.500 440V516M285.500 438V497M301.500 435V485M309.500 457V487M317.500 467V510M325.500 478V523M341.500 477V576M349.500 511V572M357.500 555V574M381.500 495V539M405.500 491V510M437.500 450V493M445.500 483V525M453.500 485V510M485.500 462V500M501.500 465V497M565.500 273V306M581.500 275V306M589.500 290V344M605.500 285V315M613.500 297V342M645.500 188V215M653.500 189V230M677.500 139V223M685.500 187V278M709.500 186V243M717.500 220V258M725.500 243V433M741.500 339V373M757.500 356V410M781.500 357V405M789.500 387V468M797.500 402V463M805.500 445V471M837.500 364V400M877.500 297V402M885.500 357V388M893.500 325V421M909.500 373V425M925.500 332V423M941.500 355V405M949.500 383V438M981.500 350V403M989.500 370V420M1045.500 268V288M1053.500 275V327M1061.500 269V324M1077.500 283V307M1093.500 244V277M1109.500 238V285M1125.500 244V260M1133.500 245V280M1149.500 247V273M1157.500 253V273M1173.500 253V265M1189.500 213V252M1197.500 215V268M1221.500 171V179M1237.500 138V181M1253.500 113V163M1261.500 140V173M1269.500 141V163M1277.500 152V177M1285.500 165V195M1293.500 175V228M1309.500 175V252M1333.500 163V198M1341.500 188V210M1357.500 161V208M1373.500 178V203M1381.500 195V237M1421.500 185V210M1437.500 159V180M1453.500 120V203M1461.500 188V213M1485.500 177V201M1493.500 180V209M1501.500 204V235M1517.500 205V222M1525.500 204V243M1557.500 180V198M1573.500 177V200M1581.500 189V218M1589.500 192V218M1613.500 136V175M1621.500 167V197"/>
<!-- bull bodies -->
<path fill="#2a8cf0" stroke="#00e5ff" d="M3.500 330h4V393h-4zM11.500 329h4V332h-4zM19.500 322h4V329h-4zM27.500 364h4V377h-4zM75.500 462h4V487h-4zM99.500 562h4V609h-4zM107.500 529h4V561h-4zM123.500 513h4V535h-4zM139.500 444h4V529h-4zM171.500 549h4V580h-4zM179.500 527h4V549h-4zM187.500 479h4V527h-4zM203.500 471h4V485h-4zM211.500 444h4V471h-4zM235.500 466h4V471h-4zM243.500 454h4V467h-4zM259.500 474h4V481h-4zM267.500 471h4V489h-4zM275.500 453h4V472h-4zM291.500 447h4V479h-4zM331.500 487h4V498h-4zM363.500 549h4V567h-4zM371.500 525h4V548h-4zM387.500 514h4V527h-4zM395.500 501h4V514h-4zM411.500 501h4V515h-4zM419.500 489h4V501h-4zM427.500 467h4V489h-4zM459.500 484h4V509h-4zM467.500 469h4V484h-4zM475.500 466h4V469h-4zM491.500 470h4V487h-4zM507.500 411h4V464h-4zM515.500 374h4V412h-4zM523.500 366h4V375h-4zM531.500 362h4V367h-4zM539.500 325h4V363h-4zM547.500 318h4V326h-4zM555.500 287h4V317h-4zM571.500 282h4V298h-4zM595.500 302h4V321h-4zM619.500 302h4V315h-4zM627.500 289h4V302h-4zM635.500 192h4V290h-4zM659.500 188h4V216h-4zM667.500 166h4V188h-4zM691.500 241h4V261h-4zM699.500 192h4V237h-4zM731.500 343h4V364h-4zM747.500 364h4V368h-4zM763.500 380h4V387h-4zM771.500 373h4V380h-4zM811.500 417h4V466h-4zM819.500 387h4V417h-4zM827.500 377h4V387h-4zM843.500 373h4V385h-4zM851.500 352h4V374h-4zM859.500 327h4V353h-4zM867.500 301h4V328h-4zM899.500 383h4V386h-4zM915.500 349h4V395h-4zM931.500 372h4V395h-4zM955.500 427h4V432h-4zM963.500 378h4V427h-4zM971.500 364h4V379h-4zM995.500 404h4V418h-4zM1003.500 389h4V404h-4zM1011.500 365h4V390h-4zM1019.500 311h4V366h-4zM1027.500 292h4V312h-4zM1035.500 269h4V290h-4zM1067.500 292h4V304h-4zM1083.500 255h4V293h-4zM1099.500 257h4V271h-4zM1115.500 250h4V282h-4zM1139.500 260h4V278h-4zM1163.500 258h4V267h-4zM1179.500 216h4V259h-4zM1203.500 204h4V260h-4zM1211.500 173h4V205h-4zM1227.500 142h4V163h-4zM1243.500 125h4V150h-4zM1299.500 175h4V222h-4zM1315.500 194h4V214h-4zM1323.500 165h4V194h-4zM1347.500 184h4V202h-4zM1363.500 197h4V206h-4zM1387.500 206h4V216h-4zM1395.500 200h4V206h-4zM1403.500 191h4V200h-4zM1411.500 189h4V191h-4zM1427.500 168h4V191h-4zM1443.500 144h4V170h-4zM1467.500 190h4V193h-4zM1475.500 178h4V190h-4zM1507.500 214h4V219h-4zM1531.500 197h4V226h-4zM1539.500 195h4V197h-4zM1547.500 189h4V195h-4zM1563.500 178h4V188h-4zM1595.500 209h4V213h-4zM1603.500 162h4V209h-4zM1627.500 178h4V183h-4zM1635.500 160h4V178h-4zM1643.500 87h4V160h-4z"/>
<!-- bear bodies -->
<path fill="#808080" stroke="#fff" d="M35.500 365h4V367h-4zM43.500 369h4V422h-4zM51.500 423h4V447h-4zM59.500 447h4V468h-4zM67.500 469h4V503h-4zM83.500 462h4V523h-4zM91.500 523h4V608h-4zM115.500 529h4V543h-4zM131.500 514h4V529h-4zM147.500 444h4V460h-4zM155.500 460h4V484h-4zM163.500 484h4V573h-4zM195.500 479h4V483h-4zM219.500 447h4V451h-4zM227.500 452h4V471h-4zM251.500 454h4V481h-4zM283.500 453h4V479h-4zM299.500 446h4V468h-4zM307.500 468h4V476h-4zM315.500 472h4V496h-4zM323.500 496h4V499h-4zM339.500 486h4V537h-4zM347.500 537h4V563h-4zM355.500 563h4V572h-4zM379.500 524h4V526h-4zM403.500 502h4V506h-4zM435.500 467h4V486h-4zM443.500 488h4V494h-4zM451.500 495h4V509h-4zM483.500 467h4V486h-4zM499.500 469h4V477h-4zM563.500 287h4V298h-4zM579.500 281h4V305h-4zM587.500 305h4V321h-4zM603.500 297h4V306h-4zM611.500 307h4V314h-4zM643.500 192h4V208h-4zM651.500 195h4V215h-4zM675.500 166h4V208h-4zM683.500 208h4V261h-4zM707.500 192h4V237h-4zM715.500 236h4V247h-4zM723.500 247h4V363h-4zM739.500 342h4V360h-4zM755.500 366h4V386h-4zM779.500 374h4V392h-4zM787.500 392h4V414h-4zM795.500 407h4V453h-4zM803.500 453h4V466h-4zM835.500 377h4V385h-4zM875.500 301h4V357h-4zM883.500 357h4V370h-4zM891.500 362h4V385h-4zM907.500 383h4V395h-4zM923.500 349h4V395h-4zM939.500 377h4V398h-4zM947.500 399h4V432h-4zM979.500 363h4V388h-4zM987.500 382h4V418h-4zM1043.500 269h4V282h-4zM1051.500 282h4V297h-4zM1059.500 296h4V304h-4zM1075.500 292h4V297h-4zM1091.500 254h4V270h-4zM1107.500 256h4V281h-4zM1123.500 250h4V252h-4zM1131.500 250h4V278h-4zM1147.500 260h4V262h-4zM1155.500 262h4V267h-4zM1171.500 258h4V261h-4zM1187.500 216h4V219h-4zM1195.500 219h4V259h-4zM1219.500 174h4V176h-4zM1235.500 142h4V152h-4zM1251.500 125h4V147h-4zM1259.500 143h4V147h-4zM1267.500 147h4V158h-4zM1275.500 158h4V173h-4zM1283.500 172h4V184h-4zM1291.500 184h4V222h-4zM1307.500 176h4V214h-4zM1331.500 165h4V190h-4zM1339.500 191h4V201h-4zM1355.500 186h4V207h-4zM1371.500 193h4V201h-4zM1379.500 201h4V216h-4zM1419.500 189h4V191h-4zM1435.500 168h4V170h-4zM1451.500 143h4V189h-4zM1459.500 189h4V204h-4zM1483.500 178h4V198h-4zM1491.500 197h4V207h-4zM1499.500 207h4V219h-4zM1515.500 214h4V216h-4zM1523.500 217h4V226h-4zM1555.500 189h4V191h-4zM1571.500 178h4V191h-4zM1579.500 192h4V212h-4zM1587.500 211h4V213h-4zM1611.500 161h4V171h-4zM1619.500 172h4V183h-4z"/>
<text x="1358" y="204" style="font-size:12.5px;fill:#9fb2c2">Week Open 4206.26</text>
<text x="1694" y="91" style="font-size:11px;fill:#e8eef3">10</text>
<path d="M1654 55h9l-4.500 5z" fill="#0000e0"/>
</g>
<!-- frames -->
<rect x="4.500" y="54.500" width="1840" height="594" fill="none" stroke="#f4f6f8"/>
<path d="M8 59h8l-4 4z" fill="#fff"/>
<text x="20" y="65" style="font-size:10px;fill:#e8eef3;letter-spacing:-.34px;white-space:pre">XAUUSD,H4  4230.08 4285.94 4226.23 4282.88</text>

<!-- price axis -->
<g stroke="#f4f6f8"><path d="M1845 84.500h3M1845 150.500h3M1845 183.500h3M1845 216.500h3M1845 249.500h3M1845 282.500h3M1845 315.500h3M1845 348.500h3M1845 381.500h3M1845 414.500h3M1845 447.500h3M1845 480.500h3M1845 513.500h3M1845 546.500h3M1845 579.500h3M1845 612.500h3M1845 645.500h3"/></g>
<g class="a">
<text class="a" x="1850" y="154">4237.60</text>
<text class="a" x="1850" y="187">4213.80</text>
<text class="a" x="1850" y="220">4189.30</text>
<text class="a" x="1850" y="253">4165.50</text>
<text class="a" x="1850" y="286">4141.70</text>
<text class="a" x="1850" y="319">4117.90</text>
<text class="a" x="1850" y="352">4093.40</text>
<text class="a" x="1850" y="385">4069.60</text>
<text class="a" x="1850" y="418">4045.80</text>
<text class="a" x="1850" y="451">4022.00</text>
<text class="a" x="1850" y="484">3998.20</text>
<text class="a" x="1850" y="517">3973.70</text>
<text class="a" x="1850" y="550">3949.90</text>
<text class="a" x="1850" y="583">3926.10</text>
<text class="a" x="1850" y="616">3902.30</text>
<text class="a" x="1850" y="649">3878.50</text>
</g>
<rect x="1846" y="82" width="41" height="1" fill="#4682b4"/>
<rect x="1846" y="83" width="41" height="11" fill="#ff0000"/><text class="l" x="1850" y="92">4281.68</text>
<rect x="1846" y="109" width="41" height="11" fill="#ffff00"/><text class="l" x="1850" y="118">4262.67</text>
<rect x="1846" y="135" width="41" height="11" fill="#ff00ff"/><text class="l" x="1850" y="144">4243.65</text>
<rect x="1846" y="170" width="41" height="11" fill="#ffa500"/><text class="l" x="1850" y="179">4218.31</text>
<rect x="1846" y="205" width="41" height="11" fill="#ff00ff"/><text class="l" x="1850" y="214">4192.96</text>
<rect x="1846" y="231" width="41" height="11" fill="#ffff00"/><text class="l" x="1850" y="240">4173.95</text>
<rect x="1846" y="258" width="41" height="11" fill="#ff0000"/><text class="l" x="1850" y="267">4154.93</text>

<!-- SUB WINDOW -->
<g clip-path="url(#cs)">
<path d="M29.500 651V946M269.500 651V946M509.500 651V946M749.500 651V946M989.500 651V946M1229.500 651V946M1469.500 651V946M1757.500 651V946" stroke="#fff" stroke-dasharray="3 3" fill="none"/>
<path d="M5 682.500H1844M5 803.500H1844M5 924.500H1844" stroke="#1db81d" stroke-dasharray="3 3" fill="none"/>
<g class="b" stroke="#e6b800" stroke-dasharray="3 3">
<use href="#gu"/><use href="#gu" transform="translate(0,10)"/>
<use href="#gl"/><use href="#gl" transform="translate(0,10)"/>
</g>
<g class="b" stroke="#8f979f" stroke-dasharray="3 3">
<use href="#pu" transform="translate(0,-8)"/><use href="#pu" transform="translate(0,8)"/>
<use href="#pl" transform="translate(0,-8)"/><use href="#pl" transform="translate(0,8)"/>
</g>
<g class="b" stroke="#800080" stroke-width="2.200"><use href="#pu"/><use href="#pl"/></g>
<path class="b" stroke="#ffff00" stroke-width="2" d="M5 818 13 782 21 786 29 810 37 810 45 825 53 826 61 847 69 831 77 829 85 831 93 868 101 840 109 808 117 796 125 810 133 788 141 775 149 753 157 768 165 808 173 810 181 808 189 778 197 775 205 760 213 755 221 752 229 777 237 772 245 772 253 801 261 787 269 812 277 782 285 788 293 789 301 789 309 791 317 812 325 819 333 801 341 847 349 837 357 832 365 827 373 803 381 792 389 790 397 783 405 771 413 790 421 775 429 765 437 773 445 807 453 793 461 793 469 785 477 767 485 798 493 799 501 792 509 777 517 737 525 722 533 733 541 743 549 726 557 728 565 732 573 753 581 778 589 819 597 802 605 802 613 833 621 817 629 808 637 797 645 742 653 772 661 771 669 762 677 798 685 848 693 848 701 816 709 822 717 835 725 915 733 865 741 850 749 849 757 857 765 835 773 835 781 837 789 864 797 845 805 846 813 844 821 805 829 793 837 772 845 783 853 777 861 767 869 752 877 803 885 793 893 813 901 798 909 814 917 802 925 807 933 792 941 793 949 821 957 824 965 810 973 785 981 785 989 803 997 803 1005 787 1013 775 1021 760 1029 735 1037 735 1045 728 1053 783 1061 785 1069 783 1077 776 1085 778 1093 764 1101 771 1109 794 1117 803 1125 776 1133 805 1141 815 1149 809 1157 811 1165 811 1173 805 1181 807 1189 788 1197 830 1205 820 1213 783 1221 746 1229 777 1237 772 1245 760 1253 792 1261 800 1269 792 1277 839 1285 834 1293 862 1301 852 1309 872 1317 823 1325 810 1333 810 1341 823 1349 819 1357 823 1365 820 1373 818 1381 852 1389 832 1397 827 1405 813 1413 800 1421 811 1429 800 1437 776 1445 776 1453 820 1461 832 1469 824 1477 804 1485 812 1493 821 1501 853 1509 830 1517 822 1525 845 1533 828 1541 800 1549 797 1557 770 1565 776 1573 793 1581 819 1589 810 1597 815 1605 827 1613 757 1621 793 1629 787 1637 797 1645 769"/>
<path class="b" stroke="#ff0000" stroke-width="2.500" d="M5 796 13 793 21 793 29 795 37 797 45 802 53 807 61 813 69 816 77 816 85 817 93 827 101 832 109 831 117 831 125 829 133 824 141 818 149 808 157 803 165 802 173 795 181 792 189 790 197 788 205 783 213 779 221 777 229 778 237 778 245 776 253 775 261 774 269 777 277 777 285 780 293 783 301 788 309 788 317 792 325 797 333 797 341 803 349 804 357 810 365 814 373 815 381 815 389 815 397 812 405 807 413 807 421 800 429 793 437 787 445 784 453 784 461 784 469 783 477 783 485 784 493 785 501 787 509 788 517 782 525 775 533 768 541 763 549 758 557 755 565 748 573 743 581 743 589 747 597 753 605 762 613 772 621 778 629 787 637 793 645 794 653 796 661 796 669 791 677 790 685 795 693 796 701 796 709 798 717 802 725 820 733 828 741 837 749 845 757 850 765 849 773 849 781 850 789 854 797 855 805 849 813 847 821 842 829 835 837 827 845 822 853 817 861 810 869 798 877 793 885 787 893 785 901 785 909 787 917 790 925 792 933 794 941 797 949 804 957 807 965 808 973 805 981 803 989 802 997 802 1005 802 1013 800 1021 797 1029 787 1037 777 1045 770 1053 769 1061 769 1069 767 1077 764 1085 764 1093 763 1101 763 1109 770 1117 777 1125 782 1133 784 1141 786 1149 790 1157 793 1165 797 1173 800 1181 804 1189 804 1197 806 1205 810 1213 807 1221 801 1229 797 1237 793 1245 787 1253 786 1261 786 1269 786 1277 787 1285 788 1293 797 1301 808 1309 818 1317 823 1325 828 1333 829 1341 831 1349 834 1357 833 1365 832 1373 827 1381 827 1389 823 1397 823 1405 824 1413 823 1421 823 1429 820 1437 815 1445 811 1453 811 1461 808 1469 808 1477 804 1485 806 1493 808 1501 811 1509 815 1517 820 1525 827 1533 827 1541 823 1549 820 1557 818 1565 815 1573 811 1581 808 1589 806 1597 805 1605 803 1613 796 1621 795 1629 795 1637 797 1645 797"/>
</g>
<rect x="4.500" y="650.500" width="1840" height="296" fill="none" stroke="#f4f6f8"/>
<text x="9" y="663" style="font-size:10px;fill:#dfe7ef;letter-spacing:-.3px;white-space:pre">iBearsPower  57.6042 45.3470</text>
<g stroke="#f4f6f8"><path d="M1845 653.500h3M1845 682.500h3M1845 803.500h3M1845 924.500h3M1845 943.500h3"/></g>
<text class="a" x="1849" y="660">81.3934</text>
<text class="a" x="1849" y="686">75</text>
<text class="a" x="1849" y="807">50</text>
<text class="a" x="1849" y="928">25</text>
<text class="a" x="1849" y="943">20.6237</text>

<!-- time axis -->
<path d="M5.500 947v4M69.500 947v4M133.500 947v4M197.500 947v4M261.500 947v4M325.500 947v4M389.500 947v4M453.500 947v4M517.500 947v4M581.500 947v4M645.500 947v4M709.500 947v4M773.500 947v4M837.500 947v4M901.500 947v4M965.500 947v4M1029.500 947v4M1093.500 947v4M1157.500 947v4M1221.500 947v4M1285.500 947v4M1349.500 947v4M1413.500 947v4M1477.500 947v4M1541.500 947v4M1605.500 947v4" stroke="#f4f6f8"/>
<text class="t" x="4" y="959">24 Oct 2025</text>
<text class="t" x="68" y="959">27 Oct 21:00</text>
<text class="t" x="132" y="959">29 Oct 05:00</text>
<text class="t" x="196" y="959">30 Oct 13:00</text>
<text class="t" x="260" y="959">31 Oct 21:00</text>
<text class="t" x="324" y="959">4 Nov 05:00</text>
<text class="t" x="388" y="959">5 Nov 13:00</text>
<text class="t" x="452" y="959">6 Nov 21:00</text>
<text class="t" x="516" y="959">10 Nov 05:00</text>
<text class="t" x="580" y="959">11 Nov 13:00</text>
<text class="t" x="644" y="959">12 Nov 21:00</text>
<text class="t" x="708" y="959">14 Nov 05:00</text>
<text class="t" x="772" y="959">17 Nov 13:00</text>
<text class="t" x="836" y="959">18 Nov 21:00</text>
<text class="t" x="900" y="959">20 Nov 05:00</text>
<text class="t" x="964" y="959">21 Nov 13:00</text>
<text class="t" x="1028" y="959">24 Nov 21:00</text>
<text class="t" x="1092" y="959">26 Nov 05:00</text>
<text class="t" x="1156" y="959">27 Nov 13:00</text>
<text class="t" x="1220" y="959">28 Nov 21:00</text>
<text class="t" x="1284" y="959">2 Dec 05:00</text>
<text class="t" x="1348" y="959">3 Dec 13:00</text>
<text class="t" x="1412" y="959">4 Dec 21:00</text>
<text class="t" x="1476" y="959">8 Dec 05:00</text>
<text class="t" x="1540" y="959">9 Dec 13:00</text>
<text class="t" x="1604" y="959">10 Dec 21:00</text>

<!-- right toolbar -->
<rect x="1892" y="52" width="27" height="937" fill="#f0f0f0"/>
<path d="M1896 55.500h22M1896 289.500h22" stroke="#aaa" stroke-width="3" stroke-dasharray="1 1"/>
<text class="f" x="1898" y="76">M1</text>
<text class="f" x="1898" y="101">M5</text>
<text class="f" x="1896" y="126">M15</text>
<text class="f" x="1896" y="151">M30</text>
<text class="f" x="1899" y="176">H1</text>
<rect x="1893.500" y="186" width="25" height="21" fill="#f8f8f8" stroke="#c8c8c8"/>
<text class="f" x="1898" y="201">H4</text>
<text class="f" x="1899" y="226">D1</text>
<text class="f" x="1898" y="251">W1</text>
<text class="f" x="1897" y="276">MN</text>
<rect x="1893.500" y="294" width="25" height="25" fill="#f8f8f8" stroke="#c8c8c8"/>
<path d="M1901 298v14l3.500-3.500 3 6 2-1-3-6h5z" fill="#333"/>
<path d="M1905.500 324v7M1905.500 333v7M1898 332.500h6M1907 332.500h6" stroke="#666"/>
<path d="M1893 347.500h26" stroke="#aaa"/>
<path d="M1905.500 358v14" stroke="#666"/>
<path d="M1899 389.500h12" stroke="#666"/>
<path d="M1900 421l11-12" stroke="#666"/>
<path d="M1898 442l4-5h12M1899 445h11l4-8M1902 437l-2 8M1906 437l-2 8M1910 435l-2 8M1898 440l14-3" stroke="#666" stroke-width=".9" fill="none"/>
<text x="1909" y="450" style="font-size:8px;font-weight:bold;fill:#555">E</text>
<path d="M1899 458.500h12M1899 462.500h12M1899 466.500h12M1899 470.500h9" stroke="#777" stroke-dasharray="1 1"/>
<text x="1909" y="474" style="font-size:8px;font-weight:bold;fill:#555">F</text>
<path d="M1899 490l11-10M1899 495l13-12M1901 498l11-10" stroke="#777" fill="none"/>
<text x="1909" y="499" style="font-size:8px;font-weight:bold;fill:#555">F</text>
<path d="M1899 520l12-13M1899 520l13-8M1899 520l14-4" stroke="#777" fill="none" stroke-width="1.100"/>
<text x="1909" y="524" style="font-size:8px;font-weight:bold;fill:#555">F</text>
<rect x="1899.500" y="535.500" width="12" height="8" rx="1" fill="#808080" stroke="#666"/>
<path d="M1898 556.500h13M1898 560.500h13M1898 564.500h13" stroke="#777" stroke-dasharray="1 1"/>
<path d="M1898 573l4-4h4" stroke="#777" fill="none"/>
<text x="1909" y="574" style="font-size:8px;font-weight:bold;fill:#555">F</text>
<path d="M1892 576.500h27" stroke="#aaa"/>

<!-- tab bar -->
<rect x="0" y="968" width="1893" height="21" fill="#f0f0f0"/>
<rect x="0" y="968" width="1893" height="2" fill="#222"/>
<rect x="1893" y="967" width="26" height="1" fill="#bbb"/>
<rect x="2" y="970" width="1" height="18" fill="#aaa"/>
<text class="tb" x="16" y="984">XAUUSD,H4</text>
<rect x="90.500" y="968.500" width="83" height="20" fill="#fff" stroke="#111"/>
<text class="tb" x="100" y="984" style="fill:#000">XAUUSD,H4</text>
<text class="tb" x="185" y="984">XAUUSD,M5</text>
<text class="tb" x="272" y="984">XAUUSD,M15</text>
<text class="tb" x="364" y="984">XMRUSD,M5</text>
<text class="tb" x="452" y="984">DOGEUSD,M15</text>
<path d="M262.500 973v13M354.500 973v13M442.500 973v13M542.500 973v13" stroke="#888"/>
<path d="M1864 975v7l-3-3.500zM1879 975v7l3-3.500z" fill="#aaa"/>

<!-- status bar -->
<rect x="0" y="989" width="1919" height="22" fill="#f0f0f0"/>
<rect x="0" y="989" width="1919" height="1" fill="#e4e4e4"/>
<rect x="1426" y="989" width="72" height="1" fill="#c4c4c4"/>
<text class="s" x="2" y="1005">For Help, press F1</text>
<path d="M1207.500 992v18M1324.500 992v18M1426.500 992v18M1568.500 992v18M1636.500 992v18M1706.500 992v18M1772.500 992v18" stroke="#aaa"/>
<svg x="1213" y="990" width="103" height="21"><text class="s" x="0" y="15">#2A November 23 2025</text></svg>
<text class="s" x="1329" y="1005">2025.11.14 01:00</text>
<text class="s" x="1503" y="1005">H: 4211.29</text>
<text class="s" x="1574" y="1005">L: 4169.69</text>
<text class="s" x="1641" y="1005">C: 4175.46</text>
<text class="s" x="1712" y="1005">V: 18668</text>
<g stroke-width="2"><path d="M1779 993v8M1782 993v8M1785 993v8M1788 993v8M1791 993v8M1794 993v5M1797 993v4M1800 993v3" stroke="#6a8a1a"/><path d="M1779 1001v9M1782 1001v9M1785 1001v9M1788 1001v9M1791 1001v9M1794 998v12M1797 997v13M1800 996v14" stroke="#b83a2a"/></g>
<text class="s" x="1804" y="1005">93889/21 kb</text>
</svg>
</body></html>
